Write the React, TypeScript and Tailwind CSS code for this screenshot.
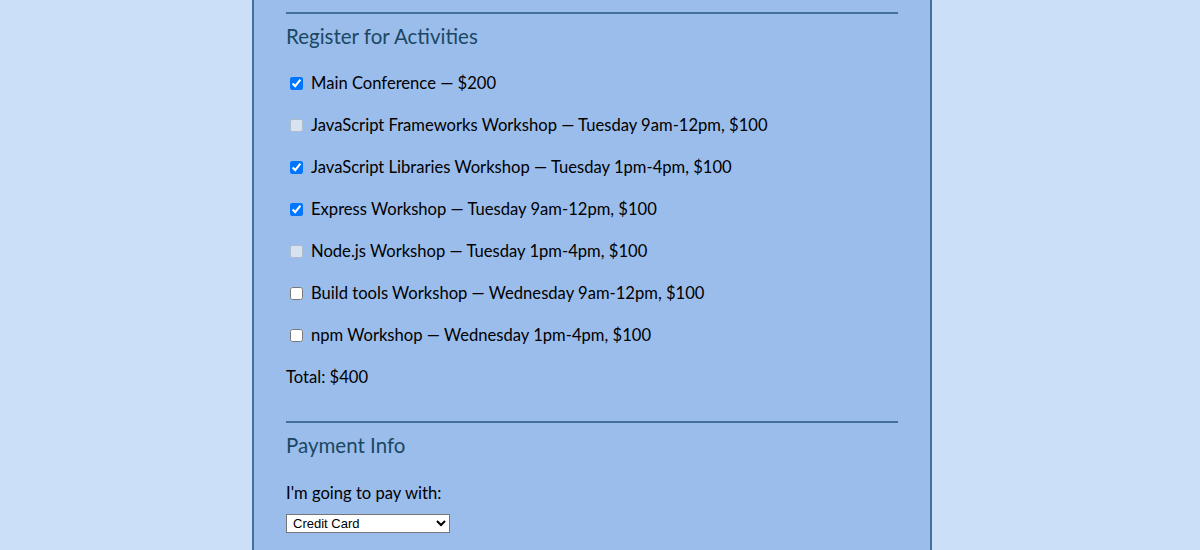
import { useState } from 'react';

// Activity list shown in the registration form
const activities = [
  { label: 'Main Conference — $200', checked: true, disabled: false },
  { label: 'JavaScript Frameworks Workshop — Tuesday 9am-12pm, $100', checked: false, disabled: true },
  { label: 'JavaScript Libraries Workshop — Tuesday 1pm-4pm, $100', checked: true, disabled: false },
  { label: 'Express Workshop — Tuesday 9am-12pm, $100', checked: true, disabled: false },
  { label: 'Node.js Workshop — Tuesday 1pm-4pm, $100', checked: false, disabled: true },
  { label: 'Build tools Workshop — Wednesday 9am-12pm, $100', checked: false, disabled: false },
  { label: 'npm Workshop — Wednesday 1pm-4pm, $100', checked: false, disabled: false },
];

export default function App() {
  const [checked, setChecked] = useState(activities.map((a) => a.checked));

  return (
    <div
      className="min-h-[550px] bg-[#cbdff9] text-black"
      style={{ fontFamily: 'Lato, "Open Sans", sans-serif' }}
    >
      <div className="ml-[252px] w-[680px] h-[550px] overflow-hidden border-x-2 border-[#42709a] bg-[#9bbdec] px-8 pt-3">
        {/* Activities section */}
        <fieldset className="border-t-2 border-[#42709a]">
          <h2 className="mt-[9px] text-[20.5px] leading-[26px] text-[#1a4862]">Register for Activities</h2>
          <div className="mt-[24px] flex flex-col gap-[21px]">
            {activities.map((a, i) => (
              <label key={i} className="flex items-center h-[21px] text-[16.6px]">
                <input
                  type="checkbox"
                  className="ml-1 mr-[8px] w-[13px] h-[13px]"
                  checked={checked[i]}
                  disabled={a.disabled}
                  onChange={() => setChecked(checked.map((c, j) => (j === i ? !c : c)))}
                />
                {a.label}
              </label>
            ))}
            <p className="h-[21px] leading-[21px] text-[16.6px]">Total: $400</p>
          </div>
        </fieldset>

        {/* Payment section */}
        <fieldset className="mt-[33px] border-t-2 border-[#42709a]">
          <h2 className="mt-[9px] text-[20.5px] leading-[26px] text-[#1a4862]">Payment Info</h2>
          <label className="mt-[25px] block text-[16.6px] leading-[21px]">I'm going to pay with:</label>
          <select
            className="mt-[10px] w-[164px] h-[19px] border border-[#767676] bg-white text-[13px] leading-[15px] px-[2px]"
            style={{ fontFamily: '"Liberation Sans", Arial, sans-serif', appearance: 'auto' }}
            defaultValue="credit"
          >
            <option value="credit">Credit Card</option>
            <option value="paypal">PayPal</option>
            <option value="bitcoin">Bitcoin</option>
          </select>
        </fieldset>
      </div>
    </div>
  );
}
